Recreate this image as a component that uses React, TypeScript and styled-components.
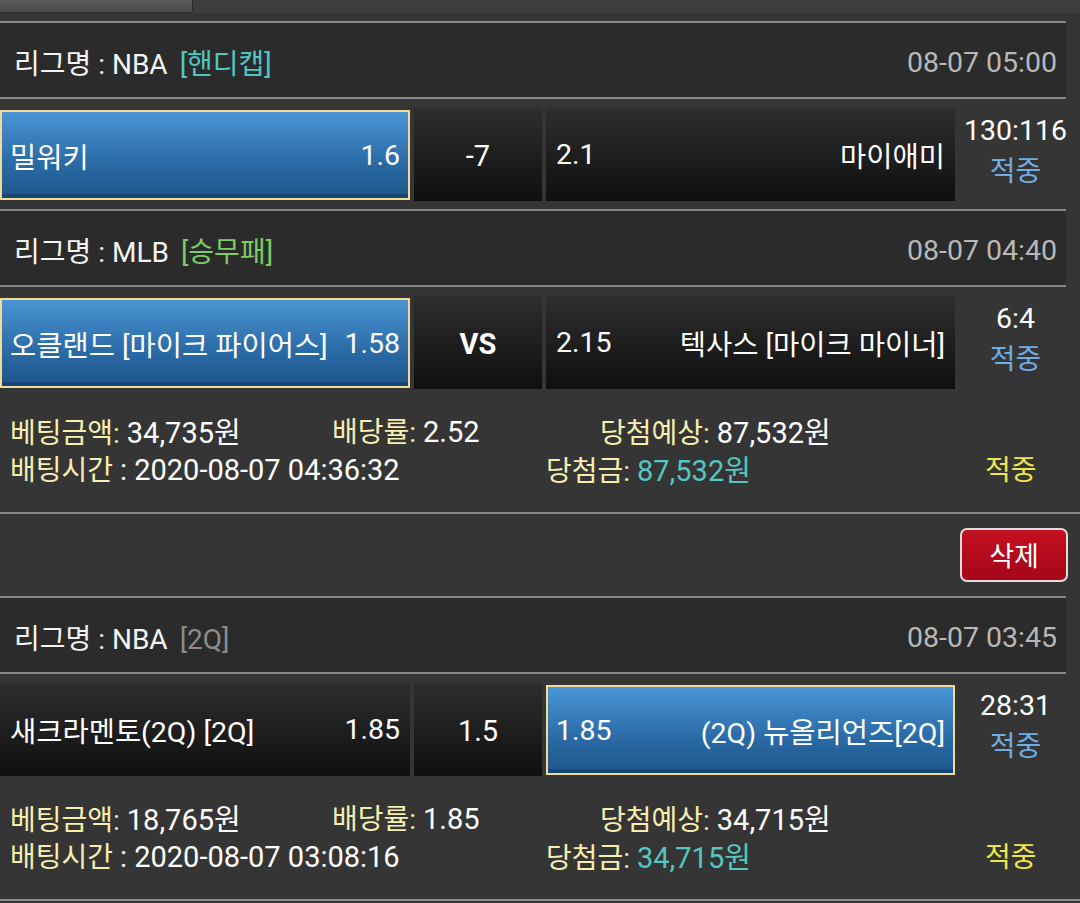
import React from "react";
import styled, { createGlobalStyle } from "styled-components";

const Global = createGlobalStyle`
  html, body { margin: 0; padding: 0; background: #353535; }
  body { font-family: "Roboto", "Noto Sans CJK KR", sans-serif; }
`;

const Page = styled.div`
  width: 1080px;
  min-height: 903px;
  background: #353535;
  color: #fff;
  font-family: "Roboto", "Noto Sans CJK KR", sans-serif;
  font-size: 28.5px;
  overflow: hidden;
`;

const TopBar = styled.div`
  height: 13px;
  background: #3d3d3d;
  margin-bottom: 8px;
  display: flex;
`;

const Tab = styled.div`
  width: 192px;
  height: 12px;
  background: linear-gradient(#5c5c5c, #4b4b4b);
  border-bottom: 1px solid #2c2c2c;
  border-right: 1px solid #2c2c2c;
  border-radius: 0 0 3px 0;
`;

const LeagueHeader = styled.div`
  margin-right: 14px;
  height: 74px;
  background: #2b2b2b;
  border-top: 2px solid #8a8a8a;
  border-bottom: 2px solid #8a8a8a;
  display: flex;
  align-items: center;
  justify-content: space-between;
  padding: 0 9px 0 14px;
`;

const LeagueName = styled.div`
  color: #f4f4f4;
  font-size: 28px;
  padding-top: 4px;
`;

const Tag = styled.span<{ $color: string }>`
  color: ${(p) => p.$color};
  margin-left: 12px;
`;

const DateText = styled.div`
  color: #b8b8b8;
  font-size: 28.5px;
  padding-top: 4px;
`;

const MatchRow = styled.div`
  margin-top: 9px;
  height: 93px;
  display: grid;
  grid-template-columns: 410px 128px 409px 1fr;
  column-gap: 4px;
  margin-bottom: 8px;
`;

const TeamCell = styled.div<{ $selected?: boolean }>`
  display: flex;
  align-items: center;
  justify-content: space-between;
  padding: 0 10px 0 10px;
  font-size: 28.5px;
  color: #fff;
  white-space: nowrap;
  ${(p) =>
    p.$selected
      ? `
    margin: 2px 0 1px;
    background: linear-gradient(#4b94d4, #2a6aa6 60%, #1e5589);
    border: 2px solid #f1db98;
    box-shadow: inset 0 -4px 0 rgba(10,40,80,0.35);
    padding: 0 8px 0 8px;
  `
      : `
    background: linear-gradient(#2e2e2e, #0f0f0f);
  `}
`;

const MidCell = styled.div<{ $bold?: boolean }>`
  display: flex;
  align-items: center;
  justify-content: center;
  background: linear-gradient(#2e2e2e, #0f0f0f);
  font-size: 29px;
  font-weight: ${(p) => (p.$bold ? 700 : 400)};
  padding-top: 2px;
`;

const ResultCell = styled.div`
  display: flex;
  flex-direction: column;
  align-items: center;
  justify-content: center;
  padding-bottom: 6px;
  margin-left: -4px;
  margin-right: 4px;
`;

const Score = styled.div`
  font-size: 28.5px;
  line-height: 40px;
  color: #fff;
`;

const HitBlue = styled.div`
  font-size: 28px;
  line-height: 42px;
  color: #6eaee4;
`;

const Info = styled.div`
  padding: 22px 0 25px 10px;
  display: flex;
  flex-direction: column;
  margin-top: -8px;
`;

const InfoLine = styled.div`
  display: flex;
  align-items: center;
  height: 38px;
`;

const InfoItem = styled.div<{ $width?: number }>`
  ${(p) => (p.$width ? `width: ${p.$width}px;` : "")}
  flex-shrink: 0;
  white-space: nowrap;
  font-size: 28px;
`;

const Label = styled.span`
  color: #f6efaf;
`;

const Value = styled.span<{ $teal?: boolean }>`
  color: ${(p) => (p.$teal ? "#52c8c0" : "#ffffff")};
  font-size: 29px;
`;

const HitYellow = styled.span`
  color: #f1e54c;
`;

const FullLine = styled.div`
  height: 2px;
  background: #8a8a8a;
`;

const ActionRow = styled.div`
  height: 82px;
  display: flex;
  align-items: center;
  justify-content: flex-end;
  padding-right: 12px;
`;

const DeleteButton = styled.button`
  width: 108px;
  height: 54px;
  border: 2px solid #e4dcdc;
  border-radius: 7px;
  background: linear-gradient(#c3101f, #a5061a);
  color: #fff;
  font-family: "Noto Sans CJK KR", sans-serif;
  font-size: 27px;
  padding: 0;
  margin-top: -1px;
`;

type Team = { name: string; odds: string; selected?: boolean };

function Match(props: {
  home: Team;
  away: Team;
  mid: string;
  bold?: boolean;
  score: string;
}) {
  const { home, away, mid, bold, score } = props;
  return (
    <MatchRow>
      <TeamCell $selected={home.selected}>
        <span>{home.name}</span>
        <span>{home.odds}</span>
      </TeamCell>
      <MidCell $bold={bold}>{mid}</MidCell>
      <TeamCell $selected={away.selected}>
        <span>{away.odds}</span>
        <span>{away.name}</span>
      </TeamCell>
      <ResultCell>
        <Score>{score}</Score>
        <HitBlue>적중</HitBlue>
      </ResultCell>
    </MatchRow>
  );
}

function Header(props: { league: string; tag: string; tagColor: string; date: string }) {
  return (
    <LeagueHeader>
      <LeagueName>
        리그명 : {props.league}
        <Tag $color={props.tagColor}>{props.tag}</Tag>
      </LeagueName>
      <DateText>{props.date}</DateText>
    </LeagueHeader>
  );
}

function BetInfo(props: { amount: string; rate: string; expected: string; time: string; win: string }) {
  return (
    <Info>
      <InfoLine>
        <InfoItem $width={322}>
          <Label>베팅금액:</Label> <Value>{props.amount}</Value>
        </InfoItem>
        <InfoItem $width={268}>
          <Label>배당률:</Label> <Value>{props.rate}</Value>
        </InfoItem>
        <InfoItem>
          <Label>당첨예상:</Label> <Value>{props.expected}</Value>
        </InfoItem>
      </InfoLine>
      <InfoLine>
        <InfoItem $width={536}>
          <Label>배팅시간</Label> <Value>: {props.time}</Value>
        </InfoItem>
        <InfoItem $width={439}>
          <Label>당첨금:</Label> <Value $teal>{props.win}</Value>
        </InfoItem>
        <InfoItem>
          <HitYellow>적중</HitYellow>
        </InfoItem>
      </InfoLine>
    </Info>
  );
}

export default function App() {
  return (
    <Page>
      <Global />
      <TopBar>
        <Tab />
      </TopBar>

      <Header league="NBA" tag="[핸디캡]" tagColor="#4fc7c4" date="08-07 05:00" />
      <Match
        home={{ name: "밀워키", odds: "1.6", selected: true }}
        away={{ name: "마이애미", odds: "2.1" }}
        mid="-7"
        score="130:116"
      />

      <Header league="MLB" tag="[승무패]" tagColor="#7ccd63" date="08-07 04:40" />
      <Match
        home={{ name: "오클랜드 [마이크 파이어스]", odds: "1.58", selected: true }}
        away={{ name: "텍사스 [마이크 마이너]", odds: "2.15" }}
        mid="VS"
        bold
        score="6:4"
      />
      <BetInfo
        amount="34,735원"
        rate="2.52"
        expected="87,532원"
        time="2020-08-07 04:36:32"
        win="87,532원"
      />
      <FullLine />
      <ActionRow>
        <DeleteButton>삭제</DeleteButton>
      </ActionRow>

      <Header league="NBA" tag="[2Q]" tagColor="#8c8c8c" date="08-07 03:45" />
      <Match
        home={{ name: "새크라멘토(2Q) [2Q]", odds: "1.85" }}
        away={{ name: "(2Q) 뉴올리언즈[2Q]", odds: "1.85", selected: true }}
        mid="1.5"
        score="28:31"
      />
      <BetInfo
        amount="18,765원"
        rate="1.85"
        expected="34,715원"
        time="2020-08-07 03:08:16"
        win="34,715원"
      />
      <FullLine />
    </Page>
  );
}
